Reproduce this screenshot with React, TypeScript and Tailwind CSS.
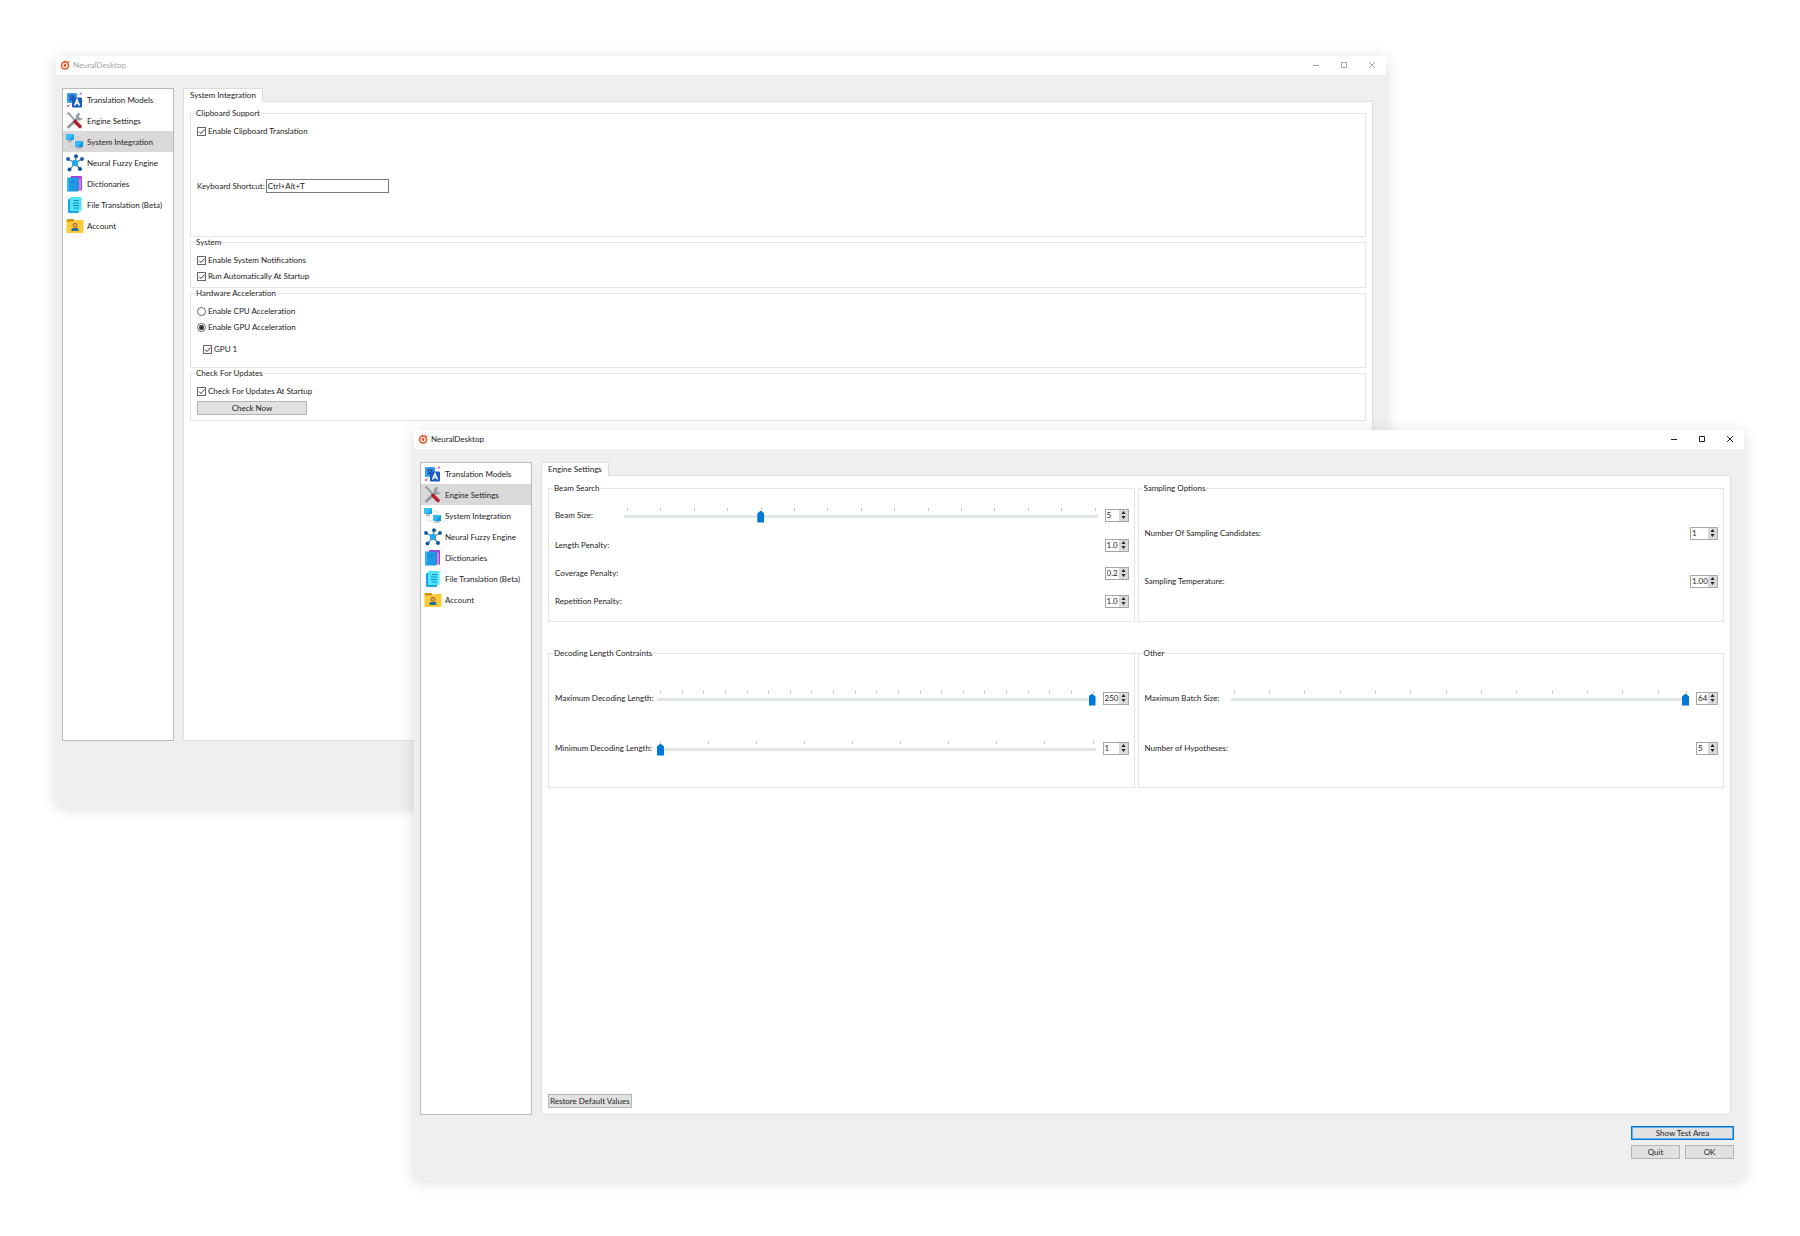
import { ReactNode, useId, useState } from 'react';
import clsx from 'clsx';

type Page = 'models' | 'engine' | 'system' | 'fuzzy' | 'dictionaries' | 'files' | 'account';

const icons: Record<Page, ReactNode> = {
  models: (
    <>
      <rect x="1" y="2" width="10" height="10" rx="1" fill="#3a9bf0" />
      <path d="M3 5h6M6 3.500v1.500M8 5c-.5 2-2.500 3.500-4.500 4.500M4 6c.5 1.500 2 2.500 3 3" stroke="#174a96" strokeWidth="1.200" fill="none" />
      <rect x="6" y="6.500" width="10" height="10" rx="1" fill="#185abd" />
      <path d="M8.500 14.500l2.500-6 2.500 6M9.500 12.500h3" stroke="#fff" strokeWidth="1.400" fill="none" />
      <path d="M14 1.500h2v2h-2zM1 14h2v2H1zM12.500 3h1v1h-1zM3.500 13h1v1h-1z" fill="#c770ea" />
    </>
  ),
  engine: (
    <>
      <path d="M2.500 15L11 7" stroke="#8d979d" strokeWidth="2.800" strokeLinecap="round" />
      <path d="M12.500 1a3.800 3.800 0 1 0 4.500 5l-2.200.6-1.800-1.600L14 1.500z" fill="#98a2a8" />
      <path d="M1.500 2l1-.8L9.500 9" stroke="#8d979d" strokeWidth="1.800" fill="none" />
      <path d="M9 9.500l5 5" stroke="#b3202f" strokeWidth="3.600" strokeLinecap="round" />
    </>
  ),
  system: (
    <>
      <path d="M9 4h5v5M4 9v5h5" stroke="#b5bcc2" strokeWidth=".8" strokeDasharray="1 1" fill="none" />
      <rect x="0" y="1" width="8" height="6" fill="#1fa4ea" />
      <path d="M0 1h8L3 7H0z" fill="#35c0f5" />
      <path d="M2 8h4" stroke="#8a959b" strokeWidth="1.200" />
      <rect x="9" y="8" width="8" height="6" fill="#1391dd" />
      <path d="M9 8h8l-5 6H9z" fill="#2fbaf3" />
      <path d="M10.500 15h5" stroke="#8a959b" strokeWidth="1.200" />
    </>
  ),
  fuzzy: (
    <>
      <path d="M9 9l1-6.500M9 9L2 5M9 9l7-4M9 9l-5 6.500M9 9l5 6" stroke="#4d7f96" strokeWidth="1.200" />
      <circle cx="9" cy="9" r="3.200" fill="#22a7ec" />
      <g fill="#15599f">
        <circle cx="10" cy="2.300" r="2" />
        <circle cx="2" cy="5" r="1.900" />
        <circle cx="16" cy="5" r="1.900" />
        <circle cx="3.500" cy="15.500" r="2" />
        <circle cx="14" cy="15" r="2" />
      </g>
    </>
  ),
  dictionaries: (
    <>
      <path d="M5 1h10a1 1 0 0 1 1 1v13.500H5z" fill="#a63bdc" />
      <path d="M13.500 3.500h1V15h-1z" fill="#e9d3f7" />
      <rect x="1" y="2.500" width="11.500" height="14" rx="1" fill="#1d9ae3" />
      <path d="M1 3.500a1 1 0 0 1 1-1h1v14H2a1 1 0 0 1-1-1z" fill="#37b8ef" />
      <path d="M5 7h4" stroke="#1470b5" strokeWidth=".8" />
    </>
  ),
  files: (
    <>
      <rect x="2" y="3" width="11" height="14" rx="1" fill="#1ba3e6" />
      <rect x="4" y="1" width="11.500" height="14" rx="1" fill="#4fe3fb" />
      <path d="M8 4.500h5M7 7h6M7 9.500h6M8 12h5" stroke="#148fbd" strokeWidth="1.200" />
    </>
  ),
  account: (
    <>
      <path d="M.5 3a1 1 0 0 1 1-1h6l1 1.500-1 1.500h-7z" fill="#d0920f" />
      <path d="M.5 4.500h8l1-1.500h8v12a1 1 0 0 1-1 1H.5z" fill="#fdcb38" />
      <circle cx="9" cy="8.300" r="2" fill="#f0a35c" stroke="#9a5b1d" strokeWidth=".9" />
      <path d="M5.500 14v-1.500c0-1 1-1.500 2-1.500h3c1 0 2 .5 2 1.500V14z" fill="#1d6fa5" />
    </>
  ),
};

const pages: { id: Page; label: string }[] = [
  { id: 'models', label: 'Translation Models' },
  { id: 'engine', label: 'Engine Settings' },
  { id: 'system', label: 'System Integration' },
  { id: 'fuzzy', label: 'Neural Fuzzy Engine' },
  { id: 'dictionaries', label: 'Dictionaries' },
  { id: 'files', label: 'File Translation (Beta)' },
  { id: 'account', label: 'Account' },
];

function Logo() {
  return (
    <svg viewBox="0 0 20 20" className="size-2.5" fill="none">
      <circle cx="10" cy="11" r="7" stroke="#e2521f" strokeWidth="3.200" />
      <circle cx="10" cy="11" r="2.800" fill="#e2521f" />
      <path d="M9 5V1M13 5l2-4M16 6l3-3" stroke="#e2521f" strokeWidth="1.800" />
    </svg>
  );
}

interface AppWindowProps {
  page: Page
  tab: string
  active?: boolean
  className: string
  footer?: ReactNode
  children: ReactNode
}

function AppWindow({ page, tab, active, className, footer, children }: AppWindowProps) {
  return (
    <section className={clsx('absolute flex flex-col bg-[#efefef] shadow-[0_2px_14px_rgba(0,0,0,0.14)]', className)}>
      <header className={clsx('flex h-[19px] shrink-0 items-center bg-white pb-px pl-1', active ? 'text-[#222]' : 'text-[#a3a3a3]')}>
        <Logo />
        <h1 className="ml-[3px] flex-1">NeuralDesktop</h1>
        <button type="button" aria-label="Minimize" className="flex w-7 justify-center">
          <svg viewBox="0 0 8 8" className="size-2" stroke="currentColor"><path d="M1 4.500h6" /></svg>
        </button>
        <button type="button" aria-label="Maximize" className="flex w-7 justify-center">
          <svg viewBox="0 0 8 8" className="size-2" stroke="currentColor" fill="none"><path d="M1.500 1.500h5v5h-5z" /></svg>
        </button>
        <button type="button" aria-label="Close" className="flex w-7 justify-center">
          <svg viewBox="0 0 8 8" className="size-2" stroke="currentColor"><path d="M1 1l6 6M7 1L1 7" /></svg>
        </button>
      </header>

      <div className="flex min-h-0 flex-1 pt-[13px] pr-[13px] pl-1.5">
        <nav className="w-28 shrink-0 border border-[#b9b9b9] bg-white">
          {pages.map(({ id, label }) => (
            <a
              key={id}
              href={`#${id}`}
              className={clsx('flex h-[21px] items-center gap-[3px] pl-[3px]', id === page && 'bg-[#d9d9d9]')}
            >
              <svg viewBox="0 0 18 18" className="size-[18px]" fill="none">{icons[id]}</svg>
              {label}
            </a>
          ))}
        </nav>

        <div className="ml-[9px] flex flex-1 flex-col">
          <div className="z-10 -mb-px flex h-3.5 shrink-0" role="tablist">
            <button type="button" role="tab" aria-selected="true" className="border border-b-0 border-[#dcdcdc] bg-white px-1.5 pb-0.5">
              {tab}
            </button>
          </div>
          <div className="flex flex-1 flex-col border border-[#dfdfdf] bg-white px-1.5 pt-1.5 pb-1.5">{children}</div>
        </div>
      </div>

      <footer className="flex h-[65px] shrink-0 justify-end pt-[11px] pr-2.5">{footer}</footer>
    </section>
  );
}

function PushButton({ children, className, focused }: { children: ReactNode; className?: string; focused?: boolean }) {
  return (
    <button
      type="button"
      className={clsx(
        'flex h-3.5 items-center justify-center border bg-[#e1e1e1]',
        focused ? 'border-[#0078d7] outline outline-[#68aee6] -outline-offset-2' : 'border-[#b4b4b4]',
        className,
      )}
    >
      {children}
    </button>
  );
}

function Group({ title, className, children }: { title: string; className?: string; children: ReactNode }) {
  return (
    <fieldset className="min-w-0 border border-[#e4e4e4]">
      <legend className="ml-1 px-px">{title}</legend>
      <div className={clsx('pr-[5px] pl-1.5', className)}>{children}</div>
    </fieldset>
  );
}

function Check({ label, className }: { label: string; className?: string }) {
  const [on, setOn] = useState(true);
  return (
    <label className={clsx('flex h-4 w-fit items-center gap-0.5', className)}>
      <span className="relative flex">
        <input
          type="checkbox"
          checked={on}
          onChange={() => setOn(!on)}
          className="peer size-[9px] appearance-none border border-[#666] bg-white"
        />
        <svg viewBox="0 0 9 9" className="pointer-events-none absolute inset-0 hidden size-[9px] peer-checked:block" fill="none" stroke="#333">
          <path d="M2 4.500l2 2 3.500-4" />
        </svg>
      </span>
      {label}
    </label>
  );
}

function Radio({ label, name, defaultChecked }: { label: string; name: string; defaultChecked?: boolean }) {
  return (
    <label className="flex h-4 w-fit items-center gap-0.5">
      <span className="relative flex">
        <input
          type="radio"
          name={name}
          defaultChecked={defaultChecked}
          className="peer size-[9px] appearance-none rounded-full border border-[#666] bg-white"
        />
        <span className="pointer-events-none absolute inset-0 m-auto hidden size-[5px] rounded-full bg-[#333] peer-checked:block" />
      </span>
      {label}
    </label>
  );
}

interface SliderProps {
  min: number
  max: number
  value: number
  step: number
  label: string
  onChange: (value: string) => void
}

function Slider({ min, max, value, step, label, onChange }: SliderProps) {
  const ticks: number[] = [];
  for (let t = min; t < max; t += step) ticks.push(t);
  ticks.push(max);

  return (
    <div className="flex h-[15px] flex-1 flex-col">
      <div className="relative mx-[3px] h-[3px]">
        {ticks.map((t) => (
          <span
            key={t}
            className="absolute h-[3px] w-px bg-[#c4c4c4]"
            style={{ left: `${((t - min) / (max - min)) * 100}%` }}
          />
        ))}
      </div>
      <input
        type="range"
        aria-label={label}
        min={min}
        max={max}
        value={value}
        onChange={(e) => onChange(e.target.value)}
        className="h-[11px] w-full appearance-none bg-transparent [&::-webkit-slider-runnable-track]:h-[3px] [&::-webkit-slider-runnable-track]:bg-[#e3e6e6] [&::-webkit-slider-thumb]:-mt-1 [&::-webkit-slider-thumb]:h-3 [&::-webkit-slider-thumb]:w-[7px] [&::-webkit-slider-thumb]:appearance-none [&::-webkit-slider-thumb]:bg-[#0078d7] [&::-webkit-slider-thumb]:[clip-path:polygon(50%_0,100%_25%,100%_100%,0_100%,0_25%)]"
      />
    </div>
  );
}

interface SettingRowProps {
  label: string
  value: string
  spinClass: string
  rowClass: string
  slider?: { min: number; max: number; step: number; gap: string }
}

function SettingRow({ label, value: initial, spinClass, rowClass, slider }: SettingRowProps) {
  const [value, setValue] = useState(initial);
  const id = useId();
  const bump = (by: number) => setValue(String(Number(value) + by));

  return (
    <div className={clsx('flex items-center', rowClass)}>
      <label htmlFor={id} className={slider ? slider.gap : 'flex-1'}>{label}</label>
      {slider && (
        <Slider min={slider.min} max={slider.max} step={slider.step} value={Number(value)} label={label} onChange={setValue} />
      )}
      <div className={clsx('flex h-[13px] border border-[#a6a6a6] bg-white', slider && 'ml-[7px]', spinClass)}>
        <input
          id={id}
          type="text"
          inputMode="decimal"
          value={value}
          onChange={(e) => setValue(e.target.value)}
          className="w-0 min-w-0 flex-1 pl-px outline-none"
        />
        <div className="flex w-[9px] flex-col bg-[#dadada]">
          <button type="button" aria-label="Increase" onClick={() => bump(1)} className="flex flex-1 items-center justify-center">
            <svg viewBox="0 0 5 3" className="h-[3px] w-[5px]"><path d="M.5 3h4L2.500 0z" fill="#222" /></svg>
          </button>
          <button type="button" aria-label="Decrease" onClick={() => bump(-1)} className="flex flex-1 items-center justify-center">
            <svg viewBox="0 0 5 3" className="h-[3px] w-[5px]"><path d="M.5 0h4L2.500 3z" fill="#222" /></svg>
          </button>
        </div>
      </div>
    </div>
  );
}

function SystemPage() {
  return (
    <>
      <Group title="Clipboard Support" className="pt-[5px] pb-[43px]">
        <Check label="Enable Clipboard Translation" />
        <div className="mt-10 flex items-center gap-px">
          <label htmlFor="shortcut">Keyboard Shortcut:</label>
          <input id="shortcut" type="text" defaultValue="Ctrl+Alt+T" className="h-3.5 w-[123px] border border-[#7a7a7a] bg-white px-px outline-none" />
        </div>
      </Group>
      <Group title="System" className="pt-[5px] pb-[3px]">
        <Check label="Enable System Notifications" />
        <Check label="Run Automatically At Startup" />
      </Group>
      <Group title="Hardware Acceleration" className="pt-[5px] pb-2.5">
        <Radio name="acceleration" label="Enable CPU Acceleration" />
        <Radio name="acceleration" label="Enable GPU Acceleration" defaultChecked />
        <Check label="GPU 1" className="mt-1.5 ml-1.5" />
      </Group>
      <Group title="Check For Updates" className="pt-[5px] pb-[5px]">
        <Check label="Check For Updates At Startup" />
        <PushButton className="mt-0.5 w-[110px]">Check Now</PushButton>
      </Group>
    </>
  );
}

function EnginePage() {
  return (
    <>
      <div className="grid grid-cols-2 gap-x-[3px] gap-y-[26px] pt-px">
        <Group title="Beam Search" className="pt-1.5 pb-1.5">
          <SettingRow label="Beam Size:" value="5" rowClass="h-8" spinClass="w-6" slider={{ min: 1, max: 15, step: 1, gap: 'w-[69px]' }} />
          <SettingRow label="Length Penalty:" value="1.0" rowClass="h-7" spinClass="w-6" />
          <SettingRow label="Coverage Penalty:" value="0.2" rowClass="h-7" spinClass="w-6" />
          <SettingRow label="Repetition Penalty:" value="1.0" rowClass="h-7" spinClass="w-6" />
        </Group>
        <Group title="Sampling Options" className="pt-4">
          <SettingRow label="Number Of Sampling Candidates:" value="1" rowClass="h-12" spinClass="w-7" />
          <SettingRow label="Sampling Temperature:" value="1.00" rowClass="h-12" spinClass="w-7" />
        </Group>
        <Group title="Decoding Length Contraints" className="pt-[15px] pb-3.5">
          <SettingRow label="Maximum Decoding Length:" value="250" rowClass="h-[50px]" spinClass="w-[26px]" slider={{ min: 0, max: 250, step: 12.5, gap: 'w-[102px]' }} />
          <SettingRow label="Minimum Decoding Length:" value="1" rowClass="h-[50px]" spinClass="w-[26px]" slider={{ min: 1, max: 10, step: 1, gap: 'w-[102px]' }} />
        </Group>
        <Group title="Other" className="pt-[15px] pb-3.5">
          <SettingRow label="Maximum Batch Size:" value="64" rowClass="h-[50px]" spinClass="w-[22px]" slider={{ min: 0, max: 64, step: 5, gap: 'w-[86px]' }} />
          <SettingRow label="Number of Hypotheses:" value="5" rowClass="h-[50px]" spinClass="w-[22px]" />
        </Group>
      </div>
      <PushButton className="mt-auto w-fit px-px">Restore Default Values</PushButton>
    </>
  );
}

export default function App() {
  return (
    <main className="relative h-screen min-h-[1100px] overflow-hidden bg-white font-['Lato','Open_Sans',sans-serif] text-[8px] leading-[10px] whitespace-nowrap text-[#222]">
      <AppWindow page="system" tab="System Integration" className="top-14 right-[414px] bottom-[430px] left-14">
        <SystemPage />
      </AppWindow>

      <AppWindow
        active
        page="engine"
        tab="Engine Settings"
        className="top-[430px] right-14 bottom-14 left-[414px]"
        footer={
          <div className="grid h-fit w-[103px] grid-cols-2 gap-[5px]">
            <PushButton focused className="col-span-2">Show Test Area</PushButton>
            <PushButton>Quit</PushButton>
            <PushButton>OK</PushButton>
          </div>
        }
      >
        <EnginePage />
      </AppWindow>
    </main>
  );
}
